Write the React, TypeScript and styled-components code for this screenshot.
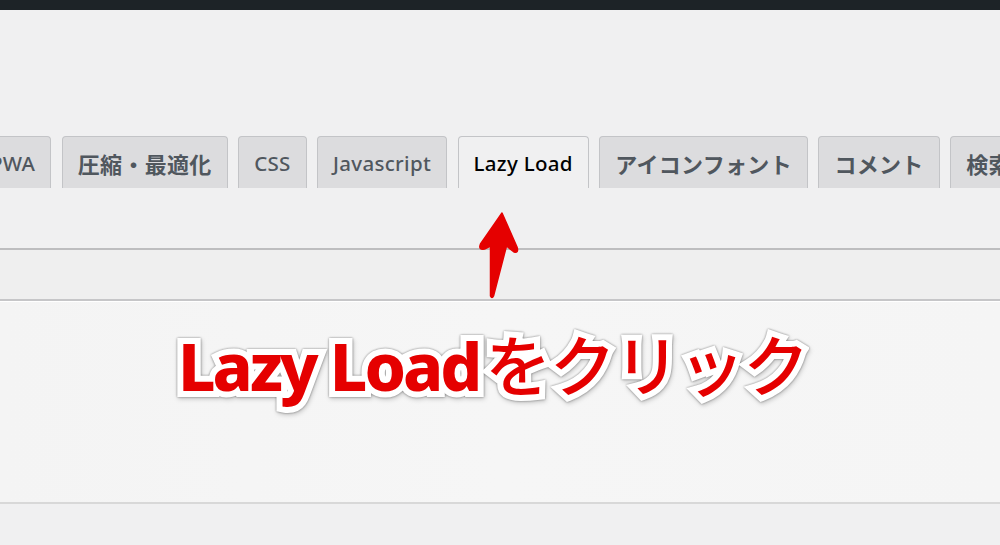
import React from "react";
import styled, { createGlobalStyle } from "styled-components";

const GlobalStyle = createGlobalStyle`
  html, body { margin: 0; padding: 0; }
  body {
    background: #f0f0f1;
    font-family: "Noto Sans", "Noto Sans CJK JP", sans-serif;
    overflow: hidden;
  }
`;

const Page = styled.div`
  position: relative;
  width: 1000px;
  height: 545px;
  overflow: hidden;
  background: #f0f0f1;
  display: flex;
  flex-direction: column;
`;

const TopBar = styled.div`
  height: 10px;
  background: #1d2327;
  flex: none;
`;

const Header = styled.div`
  padding-top: 126px;
  height: 112px;
  flex: none;
  border-bottom: 2px solid #bdbdbf;
  box-sizing: content-box;
`;

const TabRow = styled.nav`
  display: flex;
  gap: 10.5px;
  margin-left: -26px;
  white-space: nowrap;
`;

const Tab = styled.div<{ $active?: boolean; $cjk?: boolean }>`
  flex: none;
  height: 36px;
  line-height: 36px;
  padding: 7.5px 15px;
  border: 1.5px solid #c3c4c7;
  border-bottom: none;
  border-radius: 4px 4px 0 0;
  background: ${(p) => (p.$active ? "#f0f0f1" : "#dcdcde")};
  color: ${(p) => (p.$active ? "#000" : "#50575e")};
  font-family: ${(p) =>
    p.$cjk ? `"Noto Sans CJK JP", sans-serif` : `"Noto Sans", "Noto Sans CJK JP", sans-serif`};
  font-size: ${(p) => (p.$cjk ? "22px" : "20.5px")};
  font-weight: ${(p) => (p.$cjk ? 600 : 500)};
  letter-spacing: 0.3px;
  box-sizing: content-box;
`;

const Band = styled.div`
  height: 49px;
  flex: none;
  background: #efefef;
  border-bottom: 2px solid #c6c6c8;
  box-sizing: content-box;
`;

const Panel = styled.div`
  height: 200px;
  flex: none;
  background: linear-gradient(90deg, #f4f4f4, #f6f6f6 50%, #f5f5f5);
  border-top: 1px solid #ffffff;
  border-bottom: 2px solid #d8d8d8;
  box-sizing: content-box;
`;

const Footer = styled.div`
  flex: 1;
  background: #f0f0f1;
`;

const ArrowSvg = styled.svg`
  position: absolute;
  left: 470px;
  top: 205px;
  width: 60px;
  height: 100px;
  overflow: visible;
`;

const Annotation = styled.div`
  position: absolute;
  left: 178px;
  top: 322px;
  white-space: nowrap;
  font-size: 66px;
  line-height: 80px;
  color: #e50000;
  -webkit-text-stroke: 12px #ffffff;
  paint-order: stroke fill;
  filter: drop-shadow(0 0 1px rgba(0, 0, 0, 0.45)) drop-shadow(1px 2px 2px rgba(0, 0, 0, 0.18));
`;

const Latin = styled.span`
  font-family: "Noto Sans", sans-serif;
  font-weight: 800;
  letter-spacing: -3px;
`;

const Kana = styled.span`
  font-family: "Noto Sans CJK JP", sans-serif;
  font-weight: 500;
  margin-left: 6px;
  letter-spacing: -1.5px;
`;

const tabs: { label: string; cjk?: boolean }[] = [
  { label: "PWA" },
  { label: "圧縮・最適化", cjk: true },
  { label: "CSS" },
  { label: "Javascript" },
  { label: "Lazy Load" },
  { label: "アイコンフォント", cjk: true },
  { label: "コメント", cjk: true },
  { label: "検索エンジン", cjk: true },
];

export default function App() {
  return (
    <>
      <GlobalStyle />
      <Page>
        <TopBar />
        <Header>
          <TabRow>
            {tabs.map((t) => (
              <Tab key={t.label} $active={t.label === "Lazy Load"} $cjk={t.cjk}>
                {t.label}
              </Tab>
            ))}
          </TabRow>
        </Header>
        <Band />
        <Panel />
        <Footer />
        <ArrowSvg viewBox="470 205 60 100">
          <path
            d="M502,213 L517,247 Q519,253 514,252 L506.5,246 L493.5,296 Q492,299 490.5,296 L490.5,246 L484.5,249 Q478,250 480.5,244 Z"
            fill="#e50000"
            stroke="#e50000"
            strokeWidth="1.5"
            strokeLinejoin="round"
          />
        </ArrowSvg>
        <Annotation>
          <Latin>Lazy Load</Latin>
          <Kana>をクリック</Kana>
        </Annotation>
      </Page>
    </>
  );
}
